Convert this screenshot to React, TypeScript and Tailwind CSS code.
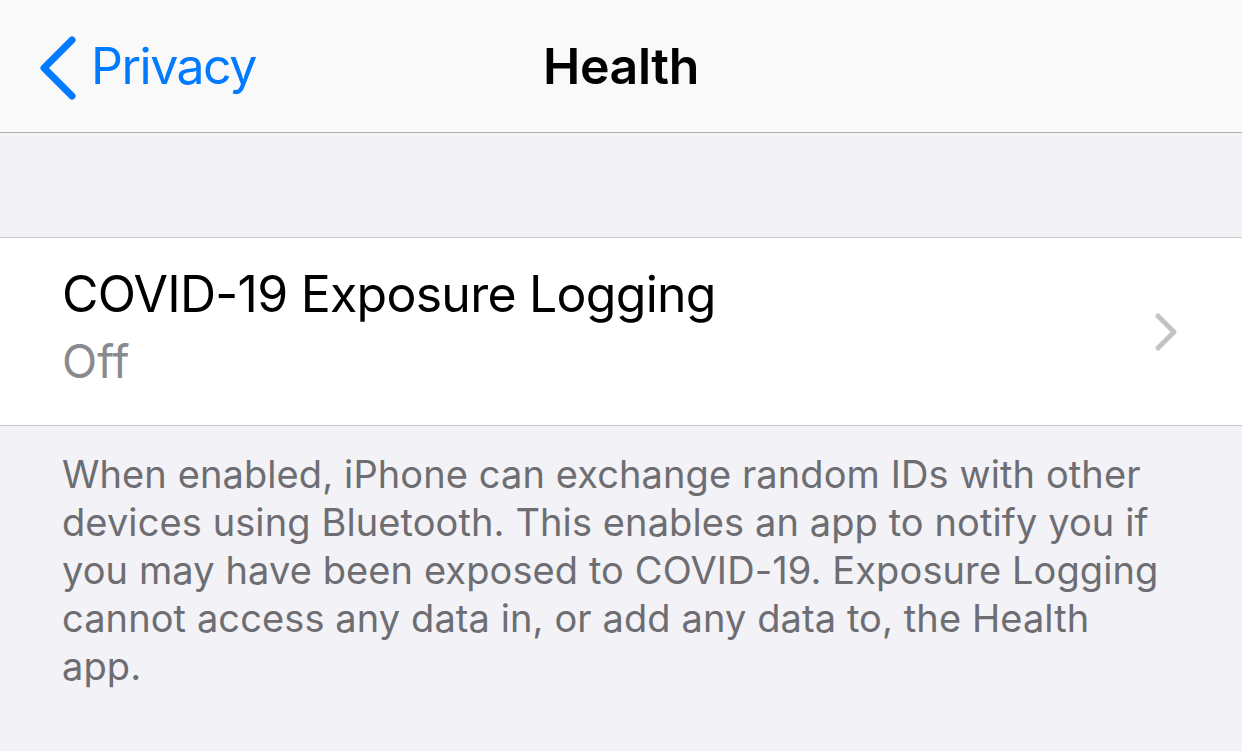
const font = { fontFamily: 'Inter, "Noto Sans", sans-serif' };

export default function App() {
  return (
    <div className="w-[1242px] h-[751px] bg-[#f2f2f7] overflow-hidden" style={font}>
      {/* Nav bar */}
      <div className="relative h-[133px] bg-[#f9f9f9] border-b border-[#b2b2b4] flex items-center">
        <div className="flex items-center pl-[38px] text-[#007aff]">
          <svg width="38" height="64" viewBox="0 0 38 64" className="mt-[4px]">
            <path d="M34 4 L6 32 L34 60" fill="none" stroke="#007aff" strokeWidth="7" strokeLinecap="round" strokeLinejoin="round" />
          </svg>
          <span className="ml-[15px] text-[50px] tracking-[-1.5px] leading-none">Privacy</span>
        </div>
        <div className="absolute left-0 right-0 text-center text-[50px] font-semibold leading-none tracking-[-0.4px] text-black pointer-events-none">
          Health
        </div>
      </div>

      {/* Spacer */}
      <div className="h-[104px]" />

      {/* Row */}
      <div className="h-[189px] bg-white border-y border-[#c8c7cc] flex pl-[62px] pr-[64px]">
        <div className="flex-1 flex flex-col pt-[26px]">
          <span className="text-[50px] leading-[60px] tracking-[-0.75px] text-black">COVID-19 Exposure Logging</span>
          <span className="mt-[5px] text-[46px] leading-[64px] text-[#8a8a8e]">Off</span>
        </div>
        <svg width="24" height="40" viewBox="0 0 24 40" className="self-center">
          <path d="M4 4 L20 20 L4 36" fill="none" stroke="#c4c4c7" strokeWidth="5" strokeLinecap="round" strokeLinejoin="round" />
        </svg>
      </div>

      {/* Footer */}
      <div className="pl-[62px] pr-[80px] pt-[24px] text-[38px] leading-[48px] tracking-[0.1px] text-[#6d6d72]">
        When enabled, iPhone can exchange random IDs with other devices using Bluetooth. This enables an app to notify you if you may have been exposed to COVID-19. Exposure Logging cannot access any data in, or add any data to, the Health app.
      </div>
    </div>
  );
}
